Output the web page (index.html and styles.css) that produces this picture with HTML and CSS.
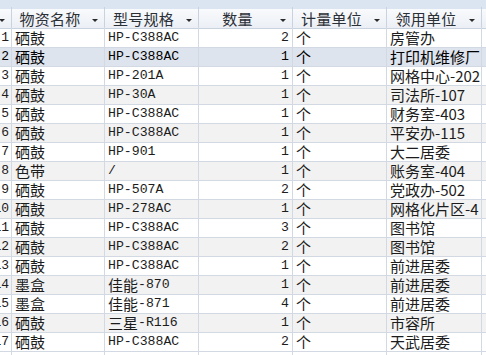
FILE: index.html
```html
<!DOCTYPE html>
<html lang="zh">
<head>
<meta charset="utf-8">
<link rel="stylesheet" href="styles.css">
</head>
<body>
<div class="sheet">
  <div class="band"></div>
  <div class="row head">
    <div class="hc id"><span class="hl"></span><span class="arr"></span></div>
    <div class="hc"><span class="hl">物资名称</span><span class="arr"></span></div>
    <div class="hc"><span class="hl">型号规格</span><span class="arr"></span></div>
    <div class="hc"><span class="hl">数量</span><span class="arr"></span></div>
    <div class="hc"><span class="hl">计量单位</span><span class="arr"></span></div>
    <div class="hc"><span class="hl">领用单位</span><span class="arr"></span></div>
    <div class="hc"></div>
  </div>
  <div class="row"><div class="c id">1</div><div class="c">硒鼓</div><div class="c m">HP-C388AC</div><div class="c m n">2</div><div class="c">个</div><div class="c">房管办</div><div class="c"></div></div>
  <div class="row sel"><div class="c id">2</div><div class="c">硒鼓</div><div class="c m">HP-C388AC</div><div class="c m n">1</div><div class="c">个</div><div class="c">打印机维修厂</div><div class="c"></div></div>
  <div class="row"><div class="c id">3</div><div class="c">硒鼓</div><div class="c m">HP-201A</div><div class="c m n">1</div><div class="c">个</div><div class="c">网格中心-202</div><div class="c"></div></div>
  <div class="row alt"><div class="c id">4</div><div class="c">硒鼓</div><div class="c m">HP-30A</div><div class="c m n">1</div><div class="c">个</div><div class="c">司法所-107</div><div class="c"></div></div>
  <div class="row"><div class="c id">5</div><div class="c">硒鼓</div><div class="c m">HP-C388AC</div><div class="c m n">1</div><div class="c">个</div><div class="c">财务室-403</div><div class="c"></div></div>
  <div class="row alt"><div class="c id">6</div><div class="c">硒鼓</div><div class="c m">HP-C388AC</div><div class="c m n">1</div><div class="c">个</div><div class="c">平安办-115</div><div class="c"></div></div>
  <div class="row"><div class="c id">7</div><div class="c">硒鼓</div><div class="c m">HP-901</div><div class="c m n">1</div><div class="c">个</div><div class="c">大二居委</div><div class="c"></div></div>
  <div class="row alt"><div class="c id">8</div><div class="c">色带</div><div class="c m">/</div><div class="c m n">1</div><div class="c">个</div><div class="c">账务室-404</div><div class="c"></div></div>
  <div class="row"><div class="c id">9</div><div class="c">硒鼓</div><div class="c m">HP-507A</div><div class="c m n">2</div><div class="c">个</div><div class="c">党政办-502</div><div class="c"></div></div>
  <div class="row alt"><div class="c id">10</div><div class="c">硒鼓</div><div class="c m">HP-278AC</div><div class="c m n">1</div><div class="c">个</div><div class="c">网格化片区-4</div><div class="c"></div></div>
  <div class="row"><div class="c id">11</div><div class="c">硒鼓</div><div class="c m">HP-C388AC</div><div class="c m n">3</div><div class="c">个</div><div class="c">图书馆</div><div class="c"></div></div>
  <div class="row alt"><div class="c id">12</div><div class="c">硒鼓</div><div class="c m">HP-C388AC</div><div class="c m n">2</div><div class="c">个</div><div class="c">图书馆</div><div class="c"></div></div>
  <div class="row"><div class="c id">13</div><div class="c">硒鼓</div><div class="c m">HP-C388AC</div><div class="c m n">1</div><div class="c">个</div><div class="c">前进居委</div><div class="c"></div></div>
  <div class="row alt"><div class="c id">14</div><div class="c">墨盒</div><div class="c m"><span class="cj">佳能</span>-870</div><div class="c m n">1</div><div class="c">个</div><div class="c">前进居委</div><div class="c"></div></div>
  <div class="row"><div class="c id">15</div><div class="c">墨盒</div><div class="c m"><span class="cj">佳能</span>-871</div><div class="c m n">4</div><div class="c">个</div><div class="c">前进居委</div><div class="c"></div></div>
  <div class="row alt"><div class="c id">16</div><div class="c">硒鼓</div><div class="c m"><span class="cj">三星</span>-R116</div><div class="c m n">1</div><div class="c">个</div><div class="c">市容所</div><div class="c"></div></div>
  <div class="row"><div class="c id">17</div><div class="c">硒鼓</div><div class="c m">HP-C388AC</div><div class="c m n">2</div><div class="c">个</div><div class="c">天武居委</div><div class="c"></div></div>
  <div class="row"><div class="c id"></div><div class="c"></div><div class="c"></div><div class="c"></div><div class="c"></div><div class="c"></div><div class="c"></div></div>
</div>
</body>
</html>
```
FILE: styles.css
```css
html, body {
  margin: 0;
  padding: 0;
  background: #ffffff;
  overflow: hidden;
}
.sheet {
  width: 486px;
  height: 355px;
  overflow: hidden;
  font-family: "Noto Sans CJK SC", "Noto Sans", sans-serif;
  font-size: 15px;
  color: #1c1c1c;
}
.band {
  height: 9px;
  background: #dbe5f2;
}
.row {
  display: grid;
  grid-template-columns: 12px 93px 94px 94px 94px 95px 80px;
  height: 19px;
  box-sizing: border-box;
  border-bottom: 1px solid #d3d9e3;
}
.row.alt { background: #f2f2f2; }
.row.sel { background: #dee4ee; color: #000; }
.row.head {
  height: 20px;
  background: linear-gradient(#f9fafc, #ebeff5);
  border-bottom: 1px solid #c9d3e0;
}
.hc {
  display: flex;
  align-items: center;
  margin: -2px 0;
  border-right: 1px solid #c9d3e0;
  overflow-x: clip;
  overflow-y: visible;
  color: #2b2f36;
  white-space: nowrap;
}
.hc.id { justify-content: flex-end; }
.hl {
  flex: 1;
  min-width: 0;
  text-align: center;
  line-height: 18px;
  letter-spacing: 0.3px;
}
.arr {
  width: 0;
  height: 0;
  border-left: 3px solid transparent;
  border-right: 3px solid transparent;
  border-top: 3px solid #2a2a2a;
  margin: 3px 6px 0 4px;
  flex: none;
}
.c {
  margin: -2px 0;
  border-right: 1px solid #d3d9e3;
  overflow-x: clip;
  overflow-y: visible;
  white-space: nowrap;
  line-height: 18px;
  padding: 0 3px;
  display: flex;
  align-items: center;
}
.c.id {
  justify-content: flex-end;
  padding: 0 2px 0 0;
  font-family: "Liberation Mono", monospace;
  font-size: 13px;
}
.m {
  font-family: "Liberation Mono", "Noto Sans CJK SC", monospace;
  font-size: 13.2px;
}
.cj {
  font-family: "Noto Sans CJK SC", sans-serif;
  font-size: 15px;
}
.n {
  justify-content: flex-end;
  padding-right: 3px;
}
```
